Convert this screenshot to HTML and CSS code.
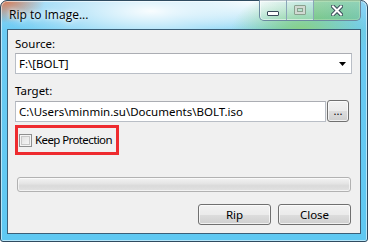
FILE: index.html
```html
<!DOCTYPE html>
<html>
<head>
<meta charset="utf-8">
<link rel="stylesheet" href="styles.css">
</head>
<body>
<div class="window">
  <div class="titlebar">
    <div class="title">Rip to Image...</div>
    <div class="caption">
      <div class="cbtn min"><span class="min-glyph"></span></div>
      <div class="cbtn max"><span class="max-glyph"></span></div>
      <div class="cbtn close">
        <svg width="12" height="11" viewBox="0 0 12 11">
          <path d="M2 1.5 L10 9.5 M10 1.5 L2 9.5" stroke="#3a4a5a" stroke-width="4" stroke-linecap="square"/>
          <path d="M2 1.5 L10 9.5 M10 1.5 L2 9.5" stroke="#ffffff" stroke-width="2" stroke-linecap="square"/>
        </svg>
      </div>
    </div>
  </div>
  <div class="client">
    <div class="label">Source:</div>
    <div class="combo">
      <span class="combo-text">F:\[BOLT]</span>
      <svg class="arrow" width="7" height="4" viewBox="0 0 7 4"><path d="M0 0 H7 L3.5 4 Z" fill="#000"/></svg>
    </div>
    <div class="label target-label">Target:</div>
    <div class="target-row">
      <div class="input">C:\Users\minmin.su\Documents\BOLT.iso</div>
      <div class="browse">...</div>
    </div>
    <div class="check-row">
      <div class="highlight">
        <span class="checkbox"></span>
        <span class="check-label">Keep Protection</span>
      </div>
    </div>
    <div class="progress"></div>
    <div class="buttons">
      <div class="btn">Rip</div>
      <div class="btn">Close</div>
    </div>
  </div>
</div>
</body>
</html>
```
FILE: styles.css
```css
html, body {
  margin: 0;
  padding: 0;
  width: 368px;
  height: 242px;
  overflow: hidden;
  background: #ffffff;
}
.window {
  box-sizing: border-box;
  width: 368px;
  height: 242px;
  border: 1px solid #2f4b60;
  border-radius: 7px 7px 3px 3px;
  padding: 0 6px 7px 6px;
  display: flex;
  flex-direction: column;
  font-family: "Noto Sans", "Open Sans", sans-serif;
  font-size: 11.5px;
  color: #000;
  background:
    radial-gradient(ellipse 40px 22px at 4px 0px, rgba(230,110,60,0.85), rgba(230,110,60,0) 100%),
    radial-gradient(ellipse 70px 40px at 300px 30px, rgba(140,210,120,0.9), rgba(140,210,120,0) 100%),
    radial-gradient(ellipse 150px 40px at 150px 10px, rgba(255,255,255,0.95), rgba(255,255,255,0) 100%),
    radial-gradient(ellipse 90px 30px at 250px 0px, rgba(255,255,255,0.9), rgba(255,255,255,0) 100%),
    linear-gradient(to bottom, #8fd4f4 0px, #6ccbf3 30px, #5ec8f2 100%);
  box-shadow: inset 0 0 0 1px rgba(255,255,255,0.55);
}
.titlebar {
  height: 28px;
  flex: none;
  display: flex;
  align-items: flex-start;
}
.title {
  padding-top: 5px;
  padding-left: 2px;
  font-family: "Open Sans", "Noto Sans", sans-serif;
  font-size: 12px;
  line-height: 17px;
  color: #000;
  text-shadow: 0 0 8px rgba(255,255,255,1), 0 0 4px rgba(255,255,255,1);
}
.caption {
  margin-left: auto;
  margin-right: 0px;
  margin-top: -1px;
  display: flex;
  height: 20px;
  border: 1px solid #6c8aa0;
  border-top: none;
  border-radius: 0 0 5px 5px;
  overflow: hidden;
  box-shadow: inset 0 0 0 1px rgba(255,255,255,0.5);
}
.cbtn {
  display: flex;
  align-items: center;
  justify-content: center;
  height: 20px;
  background: linear-gradient(to bottom, rgba(255,255,255,0.35), rgba(255,255,255,0.1));
}
.min { width: 26px; border-right: 1px solid #8aa5b8; }
.max { width: 26px; border-right: 1px solid #8aa5b8; }
.close { width: 46px; background: linear-gradient(to bottom, rgba(150,210,140,0.6), rgba(110,190,110,0.5)); }
.min-glyph {
  display: block;
  width: 10px;
  height: 3px;
  margin-top: 6px;
  background: #fff;
  border: 1px solid #3a4a5a;
  border-radius: 1px;
}
.max-glyph {
  display: block;
  box-sizing: border-box;
  width: 12px;
  height: 10px;
  border: 1px solid #8aa08e;
  box-shadow: inset 0 0 0 2px rgba(255,255,255,0.6), inset 0 0 0 3px #8aa08e;
  border-radius: 1px;
}
.close svg { display: block; margin-top: 1px; }

.client {
  flex: 1;
  background: #f0f0f0;
  border: 1px solid #3b5f78;
  padding: 6px 8px 0 7px;
  display: flex;
  flex-direction: column;
}
.label {
  height: 16px;
  line-height: 16px;
  margin-bottom: 1px;
}
.combo {
  box-sizing: border-box;
  height: 21px;
  border: 1px solid #b9bec6;
  border-top-color: #abadb3;
  background: #fff;
  display: flex;
  align-items: center;
  padding: 0 5px 0 3px;
}
.combo-text { flex: 1; }
.arrow { display: block; margin-right: 0px; }
.target-label { margin-top: 9px; }
.target-row {
  display: flex;
  align-items: center;
  gap: 1px;
  margin-right: 3px;
}
.input {
  box-sizing: border-box;
  flex: 1;
  height: 21px;
  line-height: 19px;
  border: 1px solid #b9bec6;
  border-top-color: #abadb3;
  background: #fff;
  padding-left: 3px;
  white-space: nowrap;
}
.browse {
  box-sizing: border-box;
  width: 22px;
  height: 22px;
  border: 1px solid #707070;
  border-radius: 3px;
  background: linear-gradient(to bottom, #f2f2f2 0%, #ebebeb 50%, #dddddd 51%, #cfcfcf 100%);
  box-shadow: inset 0 0 0 1px rgba(255,255,255,0.7);
  text-align: center;
  line-height: 20px;
  font-size: 11px;
  letter-spacing: 0px;
}
.check-row {
  display: flex;
  margin-top: 3px;
}
.highlight {
  box-sizing: border-box;
  height: 30px;
  border: 3px solid #ee2b2f;
  display: flex;
  align-items: center;
  padding: 0 4px 0 1px;
  white-space: nowrap;
}
.checkbox {
  flex: none;
  box-sizing: border-box;
  width: 13px;
  height: 13px;
  border: 1px solid #8e8f8f;
  background: linear-gradient(135deg, #dcdcdc, #fbfbfb);
  box-shadow: inset 0 0 0 1px #f4f4f4, inset 0 0 0 2px #c8c8c8;
  margin-right: 3px;
}
.check-label { line-height: 16px; letter-spacing: -0.6px; }
.progress {
  box-sizing: border-box;
  height: 15px;
  margin: 22px 1px 0 2px;
  border: 1px solid #b2b2b2;
  border-radius: 3px;
  background: linear-gradient(to bottom, #f3f3f3 0%, #e6e6e6 40%, #dadada 60%, #e2e2e2 100%);
  box-shadow: inset 0 0 0 1px rgba(255,255,255,0.6);
}
.buttons {
  display: flex;
  justify-content: flex-end;
  gap: 7px;
  margin-top: 12px;
  margin-right: 1px;
}
.btn {
  box-sizing: border-box;
  width: 73px;
  height: 21px;
  border: 1px solid #707070;
  border-radius: 3px;
  background: linear-gradient(to bottom, #f2f2f2 0%, #ebebeb 50%, #dddddd 51%, #cfcfcf 100%);
  box-shadow: inset 0 0 0 1px rgba(255,255,255,0.7);
  text-align: center;
  line-height: 19px;
}
```
